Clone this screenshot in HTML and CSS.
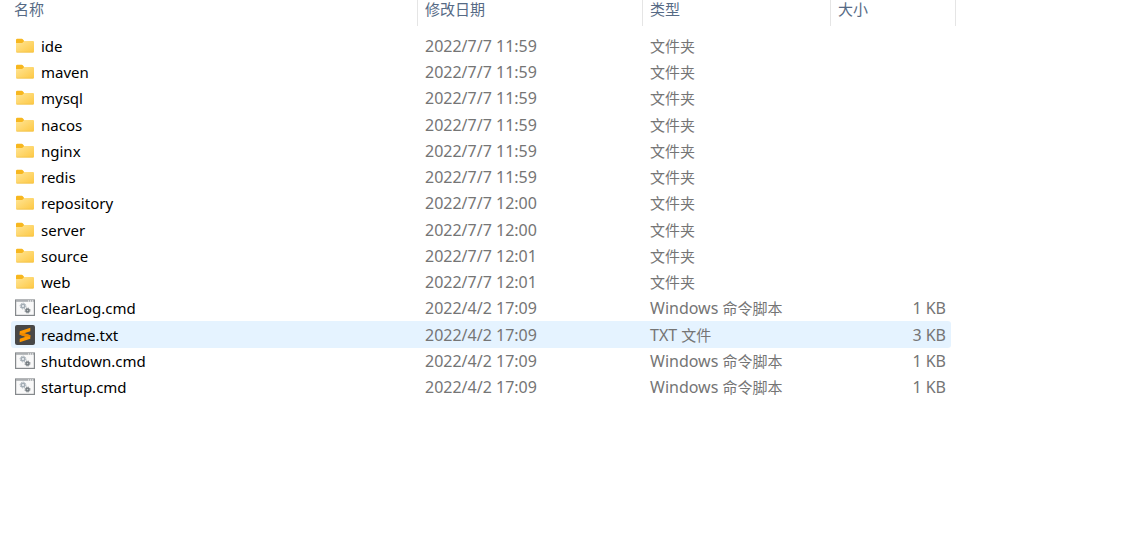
FILE: index.html
```html
<!DOCTYPE html>
<html lang="zh-CN">
<head>
    <meta charset="UTF-8">
    <meta name="viewport" content="width=device-width, initial-scale=1.0">
    <title>文件夹</title>
    <link rel="stylesheet" href="styles.css">
</head>
<body>

    <!-- Shared icons -->
    <svg class="sprite" aria-hidden="true">
        <defs>
            <linearGradient id="folderFill" x1="0" y1="0" x2="1" y2="1">
                <stop offset="0" stop-color="#ffe596"/>
                <stop offset="1" stop-color="#fdc843"/>
            </linearGradient>
            <symbol id="folder" viewBox="0 0 20 20">
                <path d="M1 4q0-1.200 1.200-1.200h4.600q.6 0 1 .5L9 4.800V9H1z" fill="#f7b71f"/>
                <path d="M1 7h6.200l2-2H18q1 0 1 1v9.500q0 1-1 1H2q-1 0-1-1z" fill="url(#folderFill)"/>
                <path d="M1.500 16.200h17" stroke="#f0bd45" stroke-width=".6"/>
            </symbol>
            <symbol id="cmd" viewBox="0 0 20 20">
                <rect x=".6" y="2" width="18.800" height="15.400" fill="#f9f9f9" stroke="#85898c" stroke-width="1.200"/>
                <path d="M1 3h18" stroke="#a9adb0" stroke-width="1.600"/>
                <path d="M13 3h1m1 0h1m1 0h1" stroke="#fff" stroke-width="1"/>
                <circle cx="8" cy="8" r="1.800" fill="#eef1f3" stroke="#a3adb5" stroke-width="1.400"/>
                <circle cx="8" cy="8" r="2.900" fill="none" stroke="#a3adb5" stroke-width="1" stroke-dasharray="1.200 1.078"/>
                <circle cx="12.500" cy="12.500" r="1.500" fill="#c4c8cb" stroke="#747b80" stroke-width="1.500"/>
                <circle cx="12.500" cy="12.500" r="2.500" fill="none" stroke="#747b80" stroke-width="1" stroke-dasharray="1.100 .864"/>
            </symbol>
            <symbol id="sublime" viewBox="0 0 20 20">
                <rect width="20" height="20" rx="2" fill="#484848"/>
                <path d="M15.300 2.800v3.400L9.200 8.200l6.100 2v3.600L4.700 17.200v-3.500l6-1.900-6-2V6.200z" fill="#ff9800"/>
                <path d="M4.700 9.800V8.200l4.500 0 6.100 2v1.500l-4.600.1z" fill="#ee8800"/>
            </symbol>
        </defs>
    </svg>

    <table class="files">
        <colgroup>
            <col class="col-name">
            <col class="col-date">
            <col class="col-type">
            <col class="col-size">
            <col>
        </colgroup>
        <thead>
            <tr>
                <th scope="col"><button type="button">名称</button></th>
                <th scope="col"><button type="button">修改日期</button></th>
                <th scope="col"><button type="button">类型</button></th>
                <th scope="col"><button type="button">大小</button></th>
            </tr>
        </thead>
        <tbody>
            <tr><td class="name"><svg class="icon"><use href="#folder"/></svg>ide</td><td>2022/7/7 11:59</td><td><span class="cjk">文件夹</span></td><td class="size"></td></tr>
            <tr><td class="name"><svg class="icon"><use href="#folder"/></svg>maven</td><td>2022/7/7 11:59</td><td><span class="cjk">文件夹</span></td><td class="size"></td></tr>
            <tr><td class="name"><svg class="icon"><use href="#folder"/></svg>mysql</td><td>2022/7/7 11:59</td><td><span class="cjk">文件夹</span></td><td class="size"></td></tr>
            <tr><td class="name"><svg class="icon"><use href="#folder"/></svg>nacos</td><td>2022/7/7 11:59</td><td><span class="cjk">文件夹</span></td><td class="size"></td></tr>
            <tr><td class="name"><svg class="icon"><use href="#folder"/></svg>nginx</td><td>2022/7/7 11:59</td><td><span class="cjk">文件夹</span></td><td class="size"></td></tr>
            <tr><td class="name"><svg class="icon"><use href="#folder"/></svg>redis</td><td>2022/7/7 11:59</td><td><span class="cjk">文件夹</span></td><td class="size"></td></tr>
            <tr><td class="name"><svg class="icon"><use href="#folder"/></svg>repository</td><td>2022/7/7 12:00</td><td><span class="cjk">文件夹</span></td><td class="size"></td></tr>
            <tr><td class="name"><svg class="icon"><use href="#folder"/></svg>server</td><td>2022/7/7 12:00</td><td><span class="cjk">文件夹</span></td><td class="size"></td></tr>
            <tr><td class="name"><svg class="icon"><use href="#folder"/></svg>source</td><td>2022/7/7 12:01</td><td><span class="cjk">文件夹</span></td><td class="size"></td></tr>
            <tr><td class="name"><svg class="icon"><use href="#folder"/></svg>web</td><td>2022/7/7 12:01</td><td><span class="cjk">文件夹</span></td><td class="size"></td></tr>
            <tr><td class="name"><svg class="icon"><use href="#cmd"/></svg>clearLog.cmd</td><td>2022/4/2 17:09</td><td>Windows <span class="cjk">命令脚本</span></td><td class="size">1 KB</td></tr>
            <tr class="active"><td class="name"><svg class="icon"><use href="#sublime"/></svg>readme.txt</td><td>2022/4/2 17:09</td><td>TXT <span class="cjk">文件</span></td><td class="size">3 KB</td></tr>
            <tr><td class="name"><svg class="icon"><use href="#cmd"/></svg>shutdown.cmd</td><td>2022/4/2 17:09</td><td>Windows <span class="cjk">命令脚本</span></td><td class="size">1 KB</td></tr>
            <tr><td class="name"><svg class="icon"><use href="#cmd"/></svg>startup.cmd</td><td>2022/4/2 17:09</td><td>Windows <span class="cjk">命令脚本</span></td><td class="size">1 KB</td></tr>
        </tbody>
    </table>

</body>
</html>
```
FILE: styles.css
```css
body {
    margin: 0;
    padding-left: 11px;
    background: #fff;
    color: #757575;
    font-family: "Noto Sans", "Noto Sans CJK SC", sans-serif;
    font-size: 16px;
}
.sprite {
    position: absolute;
    width: 0;
    height: 0;
}
.files {
    width: 100%;
    table-layout: fixed;
    border-spacing: 0;
}
.col-name {
    width: 407px;
}
.col-date {
    width: 225px;
}
.col-type {
    width: 188px;
}
.col-size {
    width: 125px;
}
th {
    height: 26px;
    padding: 0;
    border-right: 1px solid #e5e5e5;
    text-align: left;
    vertical-align: top;
}
th button {
    display: block;
    width: 100%;
    padding: 0 7px;
    border: 0;
    background: none;
    color: #566a85;
    font-family: "Noto Sans CJK SC", sans-serif;
    font-size: 15px;
    line-height: 18px;
    text-align: left;
}
th:first-child button {
    padding-left: 3px;
}
/* gap between the header and the first row */
thead::after {
    content: "";
    display: table-row;
    height: 7px;
}
td {
    height: 26px;
    padding: 0 7px;
    line-height: 24px;
    white-space: nowrap;
}
tr:nth-child(4n) td {
    height: 27px;
}
.name {
    padding-left: 4px;
    color: #000;
    font-size: 15px;
}
.icon {
    width: 20px;
    height: 20px;
    margin-right: 6px;
    vertical-align: -4px;
}
.cjk {
    font-family: "Noto Sans CJK SC", sans-serif;
    font-size: 15px;
    line-height: 1;
}
.size {
    padding-right: 5px;
    border-right: 5px solid transparent;
    background-clip: padding-box;
    text-align: right;
}
.active td {
    background-color: #e5f3ff;
}
.active td:first-child {
    border-radius: 3px 0 0 3px;
}
.active .size {
    border-radius: 0 8px 8px 0 / 0 3px 3px 0;
}
```
